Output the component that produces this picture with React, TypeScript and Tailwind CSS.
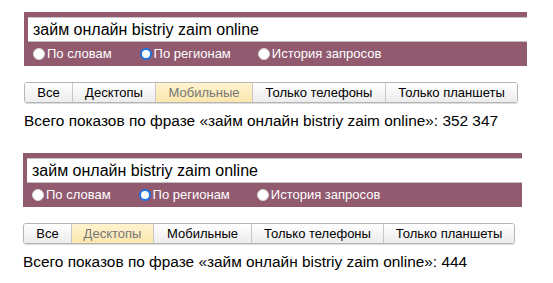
import React from "react";

type Block = {
  active: number;
  total: string;
  left: string;
  width: string;
  tabWidths: string[];
};

const tabs = ["Все", "Десктопы", "Мобильные", "Только телефоны", "Только планшеты"];

const radios = [
  { label: "По словам", checked: false, gap: "ml-[5px]" },
  { label: "По регионам", checked: true, gap: "ml-[28px]" },
  { label: "История запросов", checked: false, gap: "ml-[27px]" },
];

const Radio = ({ checked }: { checked: boolean }) =>
  checked ? (
    <span className="box-border inline-block h-[12px] w-[12px] rounded-full border-[2px] border-[#1a73e8] bg-white" />
  ) : (
    <span className="box-border inline-block h-[12px] w-[12px] rounded-full border border-[#d8d8d8] bg-white" />
  );

const SearchBlock = ({ active, total, left, width, tabWidths }: Block) => (
  <div className={`${left} font-['Liberation_Sans',Arial,sans-serif]`}>
    {/* search panel */}
    <div className={`${width} h-[54px] bg-[#915a6f] pt-[5px] pl-[4px]`}>
      <div className="flex h-[25px] items-center border-t border-t-[#c4c4c4] border-b border-b-[#bdbdbd] bg-white pl-[5px] text-[16px] text-black">
        займ онлайн bistriy zaim online
      </div>
      <div className="flex h-[24px] items-center text-[13px] text-white">
        {radios.map((r) => (
          <div key={r.label} className={`flex items-center gap-[2px] ${r.gap}`}>
            <Radio checked={r.checked} />
            <span>{r.label}</span>
          </div>
        ))}
      </div>
    </div>

    {/* device tabs */}
    <div className="mt-[16px] flex h-[21px] w-fit overflow-hidden rounded-[3px] border border-[#b5b5b5] shadow-[0_1px_1px_rgba(0,0,0,0.15)]">
      {tabs.map((t, i) => (
        <div
          key={t}
          className={`flex items-center justify-center text-[13px] ${tabWidths[i]} ${
            i > 0 ? "border-l border-l-[#c8c8c8]" : ""
          } ${
            i === active
              ? "bg-gradient-to-b from-[#fff3cf] to-[#fbe7ad] text-[#777]"
              : "bg-gradient-to-b from-white to-[#ececec] text-black"
          }`}
        >
          {t}
        </div>
      ))}
    </div>

    <div className="mt-[9px] text-[15.4px] leading-[18px] text-black">
      Всего показов по фразе «займ онлайн bistriy zaim online»: {total}
    </div>
  </div>
);

export default function App() {
  return (
    <div className="h-[283px] w-[553px] overflow-hidden bg-white pt-[12px]">
      <SearchBlock
        active={2}
        total="352 347"
        left="ml-[24px]"
        width="w-[503px]"
        tabWidths={["w-[47px]", "w-[83px]", "w-[97px]", "w-[133px]", "w-[132px]"]}
      />
      <div className="mt-[23px]">
        <SearchBlock
          active={1}
          total="444"
          left="ml-[23px]"
          width="w-[499px]"
          tabWidths={["w-[47px]", "w-[82px]", "w-[98px]", "w-[132px]", "w-[131px]"]}
        />
      </div>
    </div>
  );
}
